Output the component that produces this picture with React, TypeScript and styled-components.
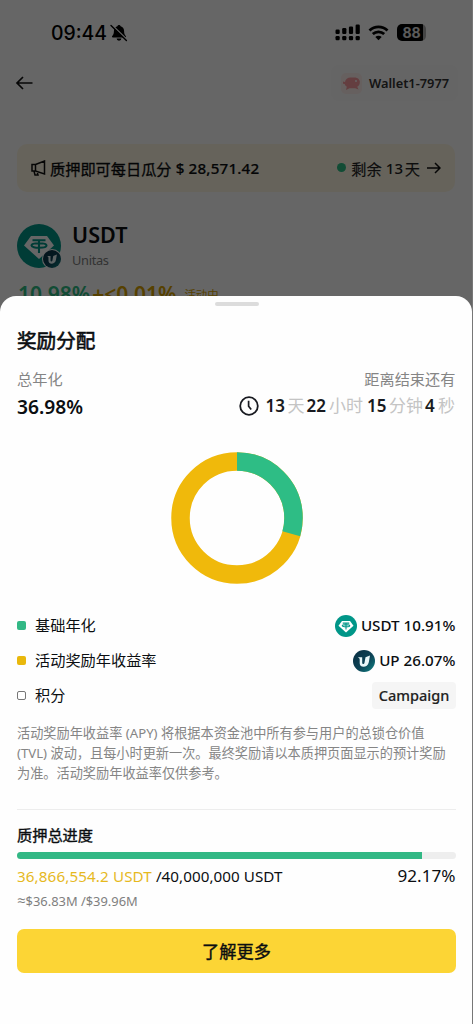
import React from "react";
import styled, { createGlobalStyle } from "styled-components";

const GlobalStyle = createGlobalStyle`
  * { box-sizing: border-box; }
  body { margin: 0; background: #fff; }
`;

const latin = `"Noto Sans", "Noto Sans CJK SC", sans-serif`;

const Screen = styled.div`
  position: relative;
  width: 473px;
  height: 1024px;
  overflow: hidden;
  background: #fff;
  border-right: 1px solid #777;
  font-family: ${latin};
  color: #181a20;
`;

const Txt = styled.span<{ $size: number; $weight?: number; $track?: number; $color?: string; $stroke?: number; $gap?: number }>`
  margin-left: ${(p) => p.$gap ?? 0}px;
  font-size: ${(p) => p.$size}px;
  font-weight: ${(p) => p.$weight ?? 400};
  letter-spacing: ${(p) => p.$track ?? 0}px;
  color: ${(p) => p.$color ?? "#0b0e11"};
  -webkit-text-stroke: ${(p) => p.$stroke ?? 0}px currentColor;
  white-space: pre;
`;

const Approx = styled.span`
  font-family: "Open Sans", "DejaVu Sans", sans-serif;
  font-size: 15px;
  line-height: 1;
`;

const StatusBar = styled.div`
  display: flex;
  align-items: center;
  height: 65px;
  padding: 0 46px 0 51px;
`;

const Clock = styled.span`
  width: 59px;
  font: 500 19.4px/24px Inter, sans-serif;
  color: #000;
`;

const StatusIcons = styled.div`
  display: flex;
  align-items: center;
  gap: 7px;
  margin-left: auto;
`;

const Battery = styled.div`
  display: flex;
  align-items: center;
  justify-content: center;
  width: 29px;
  height: 17px;
  margin-left: 1px;
  border-radius: 5px;
  background: linear-gradient(90deg, #000 90%, #aaa 90%);
  font: 700 14px/17px Inter, sans-serif;
  color: #e4e4e4;
`;

const NavBar = styled.div`
  display: flex;
  align-items: center;
  justify-content: space-between;
  height: 36px;
  padding: 0 14px 0 15px;
`;

const WalletPill = styled.div`
  display: flex;
  align-items: center;
  gap: 7px;
  width: 127px;
  height: 36px;
  padding-left: 10px;
  border-radius: 8px;
  background: #fcfcfc;
`;

const WalletAvatar = styled.div`
  display: flex;
  align-items: center;
  justify-content: center;
  width: 21px;
  height: 21px;
  border-radius: 5px;
  background: #fff0ee;
`;

const Banner = styled.div`
  display: flex;
  align-items: center;
  height: 48px;
  margin: 43px 17px 0;
  padding: 0 14px 1px 13px;
  border-radius: 10px;
  background: #fff8e4;
`;

const BannerEnd = styled.div`
  display: flex;
  align-items: center;
  margin-left: auto;
`;

const Dot = styled.i`
  width: 9px;
  height: 9px;
  margin-right: 5px;
  border-radius: 50%;
  background: #2ebd85;
`;

const AssetHeader = styled.div`
  display: flex;
  gap: 11px;
  height: 46px;
  margin: 32px 17px 0;
`;

const AssetLogo = styled.div`
  position: relative;
  width: 44px;
  height: 44px;
`;

const LogoBadge = styled.div`
  position: absolute;
  right: -1px;
  bottom: -1px;
  display: flex;
  padding: 1px;
  border-radius: 50%;
  background: #fff;
`;

const AssetNames = styled.div`
  display: flex;
  flex-direction: column;
  gap: 1px;
  line-height: 25px;
  margin-top: -2px;
`;

const YieldLine = styled.div`
  display: flex;
  align-items: center;
  height: 30px;
  margin: 9px 17px 0;
`;

const Backdrop = styled.div`
  position: absolute;
  inset: 0 -1px 0 0;
  background: rgba(0, 0, 0, 0.6);
`;

const Sheet = styled.section`
  position: absolute;
  inset: 296px 0 0;
  display: flex;
  flex-direction: column;
  padding: 6px 16px 0 17px;
  border-radius: 16px 16px 0 0;
  background: #fefefe;
`;

const Handle = styled.div`
  flex: none;
  width: 44px;
  height: 4px;
  margin: 0 auto;
  border-radius: 2px;
  background: #dcdcdc;
`;

const Line = styled.div<{ $h: number; $top?: number }>`
  display: flex;
  flex: none;
  align-items: center;
  justify-content: space-between;
  height: ${(p) => p.$h}px;
  margin-top: ${(p) => p.$top ?? 0}px;
  padding-right: 0.6px;
  line-height: ${(p) => p.$h}px;
`;

const Countdown = styled.div`
  display: flex;
  align-items: center;
  height: 26px;
  margin-top: -2px;
`;

const CountNumber = styled.b<{ $w: number }>`
  width: ${(p) => p.$w}px;
  font-size: 17px;
  font-weight: 600;
  color: #181a20;
`;

const CountUnit = styled.span<{ $w: number }>`
  width: ${(p) => p.$w}px;
  font-size: 17px;
  white-space: nowrap;
  color: #c4c4c4;
`;

const Chart = styled.svg`
  display: block;
  flex: none;
  align-self: center;
  margin: 31px 0 24px;
`;

const Label = styled.div`
  display: flex;
  align-items: center;
  gap: 9px;
`;

const Marker = styled.i<{ $fill?: string }>`
  width: 9px;
  height: 9px;
  border-radius: 2px;
  background: ${(p) => p.$fill ?? "#fff"};
  border: ${(p) => (p.$fill ? "none" : "1px solid #777")};
`;

const Value = styled.div`
  display: flex;
  align-items: center;
  gap: 4px;
`;

const Tag = styled.div`
  display: flex;
  align-items: center;
  justify-content: center;
  width: 84px;
  height: 27px;
  margin-right: -0.6px;
  border-radius: 4px;
  background: #f5f5f5;
`;

const Note = styled.p`
  flex: none;
  margin: 10px 0 0;
  font-size: 13.18px;
  line-height: 20px;
  white-space: pre;
  color: #858585;
`;

const Divider = styled.hr`
  flex: none;
  width: 100%;
  height: 1px;
  margin: 26px 0 0;
  border: 0;
  background: #ededed;
`;

const Track = styled.div`
  flex: none;
  height: 7px;
  margin-top: 5px;
  border-radius: 4px;
  overflow: hidden;
  background: #eee;
`;

const Fill = styled.div`
  height: 100%;
  background: #32b885;
`;

const Button = styled.button`
  display: flex;
  flex: none;
  align-items: center;
  justify-content: center;
  height: 44px;
  margin: 17px 0 0;
  padding: 0 0 2px;
  border: 0;
  border-radius: 7px;
  background: #fcd535;
  font-family: ${latin};
`;

const Tether = ({ size }: { size: number }) => (
  <svg width={size} height={size} viewBox="0 0 44 44">
    <circle cx="22" cy="22" r="22" fill="#009688" />
    <path d="M14 12h16l7 9.500L22 35 7 21.500z" fill="#fff" />
    <path d="M15.500 16.200h13M22 16.200V29M14.500 21.500c0-3 15-3 15 0s-15 3-15 0z" fill="none" stroke="#009688" strokeWidth="2.100" />
  </svg>
);

const Unitas = ({ size }: { size: number }) => (
  <svg width={size} height={size} viewBox="0 0 22 22">
    <defs>
      <linearGradient id={`unitas-${size}`} x1="0" y1="0" x2="1" y2="1">
        <stop offset="0" stopColor="#082c40" />
        <stop offset="0.550" stopColor="#0d4356" />
        <stop offset="1" stopColor="#0f8585" />
      </linearGradient>
    </defs>
    <circle cx="11" cy="11" r="11" fill={`url(#unitas-${size})`} />
    <path d="M4.800 7.300h4.400v5.500c0 1.600 2 1.600 2.300 0l1-5.600 4.500-1.700-1.200 6.700c-1.100 5.800-9.100 6-9.100 1V9.400C6.700 8.400 6 7.900 4.800 7.300z" fill="#e9f8fa" />
  </svg>
);

const bars = [
  { x: 0, h: 4.5 },
  { x: 6.7, h: 6 },
  { x: 13.4, h: 7.5 },
  { x: 20.1, h: 9.5 },
];

export default function App() {
  return (
    <Screen>
      <GlobalStyle />
      <StatusBar>
        <Clock>09:44</Clock>
        <svg width="18" height="18" viewBox="0 0 18 18">
          <path d="M9 1c.9 0 1.500.6 1.600 1.300 2.300.7 3.500 2.600 3.500 5 0 2.700.8 3.700 1.700 4.700.5.600.2 1.500-.7 1.500H2.900c-.9 0-1.200-.9-.7-1.500C3.100 11 3.900 10 3.900 7.300c0-2.400 1.200-4.300 3.500-5C7.500 1.600 8.100 1 9 1zM6.600 14.600h4.800a2.400 2.100 0 0 1-4.800 0z" fill="#000" />
          <path d="M2.200 1.200l15 14.600" stroke="#fff" strokeWidth="1.600" />
          <path d="M1 1.400l15.400 15" stroke="#000" strokeWidth="1.400" strokeLinecap="round" />
        </svg>
        <StatusIcons>
          <svg width="26" height="17" viewBox="0 0 26 17">
            {bars.map((b) => (
              <g key={b.x} fill="#000">
                <rect x={b.x + 0.5} y={10 - b.h} width="4.200" height={b.h} rx="1.200" />
                <rect x={b.x + 0.5} y="12" width="4.200" height="4.200" rx="1.200" />
              </g>
            ))}
          </svg>
          <svg width="21" height="16" viewBox="0 0 21 16">
            <path d="M1.500 5.600c5.200-4.900 12.800-4.900 18 0M4.800 9.100c3.300-3.100 8.100-3.100 11.400 0" fill="none" stroke="#000" strokeWidth="2.800" />
            <path d="M7.300 12c1.900-1.700 4.500-1.700 6.400 0l-3.200 3.300z" fill="#000" />
          </svg>
          <Battery>88</Battery>
        </StatusIcons>
      </StatusBar>
      <NavBar>
        <svg width="18" height="16" viewBox="0 0 18 16">
          <path d="M17.500 8H2M8 2L2 8l6 6" fill="none" stroke="#111" strokeWidth="1.700" />
        </svg>
        <WalletPill>
          <WalletAvatar>
            <svg width="17" height="15" viewBox="0 0 17 15">
              <path d="M0 5.500l2 .6C2.500 3 4.500 1.500 7.500 1.500h5c2 .3 3.700 1.500 4.200 3.500.5 2.400-.5 4.700-2.500 5.800l1.300 2.700-3.200-1.200H6.500L3 14l.8-3.300C2.600 10 1.900 9 1.700 8L0 7.800z" fill="#f99ca0" />
              <circle cx="13" cy="5" r="0.900" fill="#fff" />
            </svg>
          </WalletAvatar>
          <Txt $size={12.8} $weight={600} $color="#333">Wallet1-7977</Txt>
        </WalletPill>
      </NavBar>
      <Banner>
        <svg width="17" height="16" viewBox="0 0 17 16">
          <path d="M5.500 4.500L14.500 1v13L5.500 11H2V4.500zM5.500 4.500V11M4 11l1 4h3l-1-3.500" fill="none" stroke="#111" strokeWidth="1.500" />
        </svg>
        <Txt $size={15.2} $stroke={0.3} $gap={3}>质押即可每日瓜分</Txt>
        <Txt $size={15.2} $weight={500} $track={0.18} $stroke={0.2}> $ 28,571.42</Txt>
        <BannerEnd>
          <Dot />
          <Txt $size={15.2} $stroke={0.15} $color="#222">剩余</Txt>
          <Txt $size={15} $weight={500} $color="#222" $track={0.2}> 13</Txt>
          <Txt $size={15.2} $stroke={0.15} $color="#222" $gap={1.5}>天</Txt>
          <svg width="14" height="12" viewBox="0 0 14 12" style={{ marginLeft: 7 }}>
            <path d="M0 6h12.500M8 1l5 5-5 5" fill="none" stroke="#111" strokeWidth="1.500" />
          </svg>
        </BannerEnd>
      </Banner>
      <AssetHeader>
        <AssetLogo>
          <Tether size={44} />
          <LogoBadge>
            <Unitas size={18} />
          </LogoBadge>
        </AssetLogo>
        <AssetNames>
          <Txt $size={21.6} $weight={600}>USDT</Txt>
          <Txt $size={12.8} $track={-0.3} $color="#808080">Unitas</Txt>
        </AssetNames>
      </AssetHeader>
      <YieldLine>
        <Txt $size={21} $weight={600} $color="#2ebd85" $gap={1}>10.98%</Txt>
        <Txt $size={21} $weight={600} $color="#d9a300" $gap={2}>{"+<0.01%"}</Txt>
        <Txt $size={11.4} $color="#d9a300" $gap={8}>活动中</Txt>
      </YieldLine>

      <Backdrop />

      <Sheet>
        <Handle />
        <Line $h={30} $top={20}><Txt $size={19.6} $stroke={0.6}>奖励分配</Txt></Line>
        <Line $h={26} $top={10}>
          <Txt $size={15.2} $color="#858585">总年化</Txt>
          <Txt $size={15.2} $color="#858585">距离结束还有</Txt>
        </Line>
        <Line $h={28} $top={1}>
          <Txt $size={19.2} $weight={600}>36.98%</Txt>
          <Countdown>
            <svg width="20" height="20" viewBox="0 0 20 20" style={{ marginRight: 6 }}>
              <circle cx="10" cy="10" r="8.800" fill="none" stroke="#181a20" strokeWidth="1.800" />
              <path d="M9.600 4.800v5.400l2.600 3.400" fill="none" stroke="#181a20" strokeWidth="1.700" />
            </svg>
            <CountNumber $w={22}>13</CountNumber>
            <CountUnit $w={19}>天</CountUnit>
            <CountNumber $w={22.5}>22</CountNumber>
            <CountUnit $w={38}>小时</CountUnit>
            <CountNumber $w={22}>15</CountNumber>
            <CountUnit $w={36}>分钟</CountUnit>
            <CountNumber $w={13}>4</CountNumber>
            <CountUnit $w={17.5}>秒</CountUnit>
          </Countdown>
        </Line>
        <Chart width="132" height="132" viewBox="0 0 132 132">
          <g transform="rotate(-90 66 66)" fill="none" strokeWidth="18.500">
            <circle cx="66" cy="66" r="56.500" stroke="#f0b90b" />
            <circle cx="66" cy="66" r="56.500" stroke="#2ebd85" pathLength="36.980" strokeDasharray="10.910 26.070" />
          </g>
        </Chart>
        <Line $h={35}>
          <Label><Marker $fill="#32b885" /><Txt $size={15.2}>基础年化</Txt></Label>
          <Value><Tether size={22} /><Txt $size={15.2} $weight={500}>USDT 10.91%</Txt></Value>
        </Line>
        <Line $h={35}>
          <Label><Marker $fill="#e9b80c" /><Txt $size={15.2}>活动奖励年收益率</Txt></Label>
          <Value><Unitas size={22} /><Txt $size={15.2} $weight={500}>UP 26.07%</Txt></Value>
        </Line>
        <Line $h={35}>
          <Label><Marker /><Txt $size={15.2}>积分</Txt></Label>
          <Tag><Txt $size={14.5} $weight={500} $color="#222" $stroke={0.15}>Campaign</Txt></Tag>
        </Line>
        <Note>
          {"活动奖励年收益率 (APY) 将根据本资金池中所有参与用户的总锁仓价值\n(TVL) 波动，且每小时更新一次。最终奖励请以本质押页面显示的预计奖励\n为准。活动奖励年收益率仅供参考。"}
        </Note>
        <Divider />
        <Line $h={24} $top={13}><Txt $size={15.2} $stroke={0.4}>质押总进度</Txt></Line>
        <Track><Fill style={{ width: "92.17%" }} /></Track>
        <Line $h={28} $top={3}>
          <span>
            <Txt $size={15.2} $color="#e6b91e" $track={0.12}>36,866,554.2 USDT</Txt>
            <Txt $size={15.2} $track={0.05}> /40,000,000 USDT</Txt>
          </span>
          <Txt $size={17.1}>92.17%</Txt>
        </Line>
        <Line $h={22}><Txt $size={12.9} $color="#808080"><Approx>≈</Approx>$36.83M /$39.96M</Txt></Line>
        <Button><Txt $size={17.2} $stroke={0.4}>了解更多</Txt></Button>
      </Sheet>
    </Screen>
  );
}
